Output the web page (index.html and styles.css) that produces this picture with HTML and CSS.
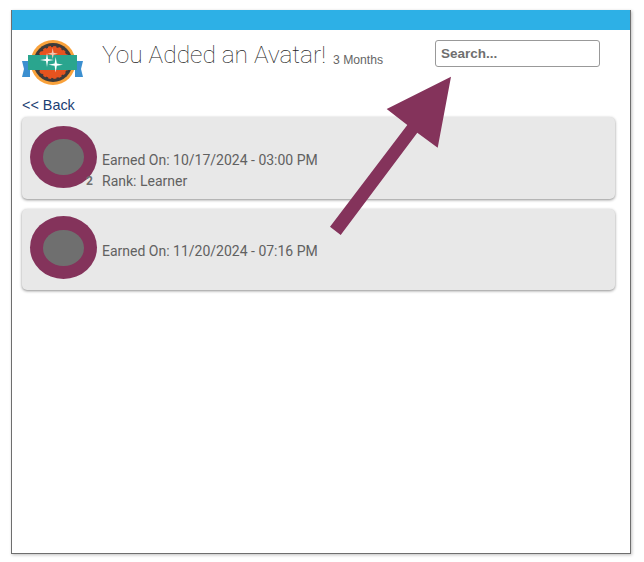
FILE: index.html
```html
<!DOCTYPE html>
<html lang="en">
<head>
<meta charset="utf-8">
<title>You Added an Avatar!</title>
<link rel="stylesheet" href="styles.css">
</head>
<body>
<div class="window">
  <div class="topbar"></div>
  <header class="header">
    <svg class="logo" width="62" height="46" viewBox="0 0 62 46">
      <path d="M0 21H8V37H0L2 29Z" fill="#3b8fd0"/>
      <path d="M61 21H53V37H61L59 29Z" fill="#3b8fd0"/>
      <circle cx="31" cy="22.5" r="22.5" fill="#f9a13a"/>
      <circle cx="31" cy="22.5" r="19.5" fill="#3e3b3a"/>
      <circle cx="31" cy="22.5" r="15.5" fill="#e6531f" stroke="#e6531f" stroke-width="2" stroke-dasharray="3 2.2"/>
      <path d="M6 15H55V30H6Z" fill="#2aa58e"/>
      <path d="M30.7 8L31.6 12.7L36 13.7L31.6 14.7L30.7 19L29.8 14.7L25.5 13.7L29.8 12.7Z" fill="#f3c7b4"/>
      <path d="M25 13L26 19L32 20L26 21L25 27L24 21L18 20L24 19Z" fill="#fff"/>
      <path d="M33.7 17L34.8 23.6L41 24.7L34.8 25.8L33.7 32.5L32.6 25.8L26.5 24.7L32.6 23.6Z" fill="#fff"/>
    </svg>
    <h1 class="title">You Added an Avatar!</h1>
    <span class="duration">3 Months</span>
    <input class="search" type="text" placeholder="Search...">
  </header>
  <a class="back" href="#">&lt;&lt; Back</a>
  <section class="card card-first">
    <div class="avatar"><div class="avatar-inner"></div></div>
    <span class="count">2</span>
    <div class="details">
      <div class="line">Earned On: 10/17/2024 - 03:00 PM</div>
      <div class="line">Rank: Learner</div>
    </div>
  </section>
  <section class="card card-second">
    <div class="avatar"><div class="avatar-inner"></div></div>
    <div class="details">
      <div class="line">Earned On: 11/20/2024 - 07:16 PM</div>
      <div class="line"></div>
    </div>
  </section>
</div>
<svg class="arrow" width="644" height="562" viewBox="0 0 644 562">
  <polygon points="451,76.7 437.7,147.7 417.3,132.7 340.7,235 330,226.7 407.3,125 386.7,109" fill="#84335b"/>
</svg>
</body>
</html>
```
FILE: styles.css
```css
* { box-sizing: border-box; }
html, body { margin: 0; padding: 0; background: #fff; }
body { padding: 10px 0 0 11px; width: 644px; height: 562px; overflow: hidden; position: relative; }
.window {
  width: 620px;
  height: 544px;
  border: 1px solid #6e6e6e;
  border-top: 0;
  box-shadow: 1px 1px 3px rgba(0,0,0,.25);
  background: #fff;
}
.topbar { height: 20px; background: #2db0e6; }
.header { display: flex; align-items: flex-start; height: 61px; padding: 10px 0 0 10px; position: relative; }
.logo { display: block; flex: none; margin-right: 18px; }
.title {
  margin: 0;
  font: 100 24.5px/30px Roboto, sans-serif;
  color: #222;
  white-space: nowrap;
}
.duration { font: 300 12.2px/14px "Liberation Sans", sans-serif; color: #666; margin: 13px 0 0 7px; white-space: nowrap; }
.search {
  margin-left: auto;
  margin-right: 30px;
  width: 165px;
  height: 27px;
  border: 1px solid #999;
  border-radius: 3px;
  padding: 0 5px 1px;
  background: #fff;
  font: 700 13.5px "Liberation Sans", sans-serif;
}
.search::placeholder { color: #6f6f6f; opacity: 1; }
.back { display: block; margin-left: 10px; font: 14.4px/20px "Liberation Sans", sans-serif; color: #1a3d72; text-decoration: none; height: 26px; padding-top: 4px; }
.card {
  display: flex;
  position: relative;
  width: 593px;
  margin: 0 0 10px 10px;
  padding-left: 8px;
  background: #e8e8e8;
  border-radius: 5px;
  box-shadow: 0 1px 3px rgba(0,0,0,.45);
}
.card-first { height: 82px; padding-top: 9px; }
.card-second { height: 81px; padding-top: 7px; }
.avatar {
  flex: none;
  width: 67px;
  height: 63px;
  border-radius: 50%;
  background: #84335b;
  display: flex;
  align-items: center;
  justify-content: center;
}
.card-first .avatar { height: 62px; }
.avatar-inner { width: 41px; height: 36px; border-radius: 50%; background: #6f6f6f; }
.count { position: absolute; left: 64px; top: 57px; font: 700 12px/14px Roboto, sans-serif; color: #6f6f6f; }
.details { margin-left: 5px; font: 14px/21px Roboto, sans-serif; color: #616161; }
.card-first .details { padding-top: 24px; }
.card-second .details { padding-top: 25px; }
.line { height: 21px; white-space: nowrap; }
.arrow { position: absolute; left: 0; top: 0; pointer-events: none; }
```
